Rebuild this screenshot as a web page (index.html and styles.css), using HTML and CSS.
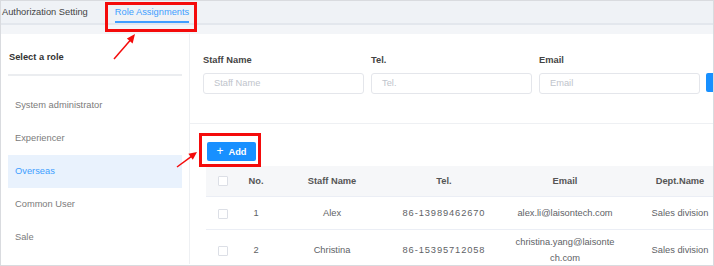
FILE: index.html
```html
<!DOCTYPE html>
<html lang="en">
<head>
    <meta charset="UTF-8">
    <title>Role Assignments</title>
    <link rel="stylesheet" href="styles.css">
</head>
<body>
<div class="frame">
    <ul class="tabs">
        <li>Authorization Setting</li>
        <li class="active">Role Assignments</li>
    </ul>
    <div class="strip"></div>
    <div class="main">
        <div class="roles">
            <div class="roles-title">Select a role</div>
            <ul class="role-list">
                <li>System administrator</li>
                <li>Experiencer</li>
                <li class="selected">Overseas</li>
                <li>Common User</li>
                <li>Sale</li>
            </ul>
        </div>
        <div class="staff">
            <div class="search">
                <div class="field">
                    <label>Staff Name</label>
                    <div class="input">Staff Name</div>
                </div>
                <div class="field">
                    <label>Tel.</label>
                    <div class="input">Tel.</div>
                </div>
                <div class="field">
                    <label>Email</label>
                    <div class="input">Email</div>
                </div>
                <div class="field">
                    <label>&nbsp;</label>
                    <div class="btn-search"></div>
                </div>
            </div>
            <div class="list">
                <div class="btn-add"><span class="plus">+</span>Add</div>
                <table class="grid">
                    <colgroup>
                        <col style="width:34px">
                        <col style="width:32px">
                        <col style="width:120px">
                        <col style="width:104px">
                        <col style="width:138px">
                        <col style="width:92px">
                    </colgroup>
                    <thead>
                        <tr>
                            <th><span class="check"></span></th>
                            <th>No.</th>
                            <th>Staff Name</th>
                            <th>Tel.</th>
                            <th>Email</th>
                            <th>Dept.Name</th>
                        </tr>
                    </thead>
                    <tbody>
                        <tr>
                            <td><span class="check"></span></td>
                            <td>1</td>
                            <td>Alex</td>
                            <td class="num">86-13989462670</td>
                            <td class="mail">alex.li@laisontech.com</td>
                            <td>Sales division</td>
                        </tr>
                        <tr>
                            <td><span class="check"></span></td>
                            <td>2</td>
                            <td>Christina</td>
                            <td class="num">86-15395712058</td>
                            <td class="mail">christina.yang@laisontech.com</td>
                            <td>Sales division</td>
                        </tr>
                    </tbody>
                </table>
            </div>
        </div>
    </div>

    <!-- annotation marks -->
    <svg class="marks" width="714" height="266" viewBox="0 0 714 266">
        <rect x="106.5" y="3.5" width="89" height="27" fill="none" stroke="#f40b0b" stroke-width="3"/>
        <rect x="200.5" y="134.5" width="59" height="31" fill="none" stroke="#f40b0b" stroke-width="3"/>
        <line x1="114" y1="59" x2="130.5" y2="40" stroke="#f40b0b" stroke-width="1.5"/>
        <polygon points="135,34 132.6,43.4 126.9,38.6" fill="#f40b0b"/>
        <line x1="177" y1="167" x2="191.5" y2="156.3" stroke="#f40b0b" stroke-width="1.5"/>
        <polygon points="197,152 192.8,159.8 188.4,153.8" fill="#f40b0b"/>
    </svg>
</div>
</body>
</html>
```

FILE: styles.css
```css
body {
    margin: 0;
}
.frame {
    position: relative;
    width: 714px;
    height: 266px;
    border: 1px solid #d9dbdf;
    box-sizing: border-box;
    overflow: hidden;
    background: #fff;
    font-family: "Liberation Sans", Arial, sans-serif;
    font-size: 9.3px;
    color: #606266;
}
.tabs {
    list-style: none;
    margin: 0;
    padding: 0 0 0 1px;
    height: 22px;
    display: flex;
    gap: 27px;
    background: #eff2f6;
    border-bottom: 2px solid #e3e7ed;
}
.tabs li {
    line-height: 22px;
    color: #444;
}
.tabs li.active {
    color: #409eff;
    border-bottom: 2px solid #409eff;
}
.strip {
    height: 9px;
    background: #f3f5f8;
}
.main {
    display: flex;
    height: 230px;
}
.roles {
    width: 174px;
    padding: 0 7px;
    border-right: 1px solid #eef0f3;
    flex: none;
}
.roles-title {
    padding: 17px 0 11px 1px;
    line-height: 12px;
    font-weight: bold;
    color: #333;
    border-bottom: 2px solid #ebedf0;
}
.role-list {
    list-style: none;
    margin: 13px 0 0;
    padding: 0;
}
.role-list li {
    height: 33px;
    line-height: 33px;
    padding-left: 7px;
    color: #7b7b7b;
}
.role-list li.selected {
    background: #e9f2fd;
    color: #409eff;
}
.staff {
    flex: 1;
    min-width: 0;
}
.search {
    display: flex;
    gap: 7px;
    padding: 19px 0 29px 13px;
    border-bottom: 1px solid #eef0f3;
}
.field {
    width: 161px;
    flex: none;
}
.field label {
    display: block;
    line-height: 14px;
    margin-bottom: 6px;
    font-weight: bold;
    color: #444;
}
.input {
    height: 19px;
    line-height: 19px;
    border: 1px solid #e4e6eb;
    border-radius: 3px;
    padding-left: 10px;
    color: #c0c4cc;
}
.btn-search {
    margin-left: -1px;
    height: 19px;
    margin-top: 1px;
    border-radius: 2px;
    background: #1890ff;
}
.list {
    padding: 18px 0 0 16px;
}
.btn-add {
    width: 49px;
    height: 19px;
    line-height: 19px;
    margin-left: 1px;
    text-align: center;
    background: #1890ff;
    border-radius: 2px;
    color: #fff;
    font-weight: bold;
}
.plus {
    font-weight: normal;
    font-size: 12px;
    margin-right: 5px;
}
.grid {
    margin-top: 5px;
    width: 520px;
    table-layout: fixed;
    border-collapse: collapse;
}
.grid th {
    height: 30px;
    padding: 0;
    background: #f6f7f9;
    font-weight: bold;
    color: #555;
    text-align: center;
}
.grid td {
    padding: 8px 0;
    line-height: 16px;
    text-align: center;
    border-top: 1px solid #ebeef5;
}
.grid td.mail {
    padding: 4px 18px;
    word-break: break-all;
}
.grid td.num {
    letter-spacing: 0.9px;
}
.check {
    display: inline-block;
    width: 8px;
    height: 8px;
    border: 1px solid #dcdfe6;
    border-radius: 1px;
    background: #fff;
    vertical-align: middle;
}
.marks {
    position: absolute;
    left: -1px;
    top: -1px;
    pointer-events: none;
}
```
